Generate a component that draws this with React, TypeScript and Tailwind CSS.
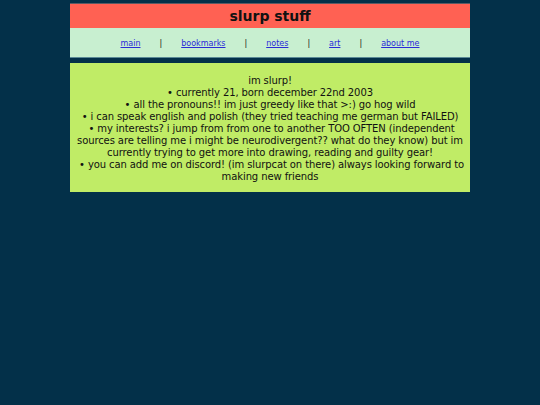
export default function App() {
  const links = ["main", "bookmarks", "notes", "art", "about me"];
  return (
    <div className="min-h-[405px] bg-[#033049] pt-[3px] font-['DejaVu_Sans',Verdana,sans-serif] text-[#111]">
      <div className="mx-auto w-[400px]">
        <div className="border-t border-[#5b5a63] bg-[#ff6153] py-[4px] text-center text-[14px] font-bold leading-[16px]">
          slurp stuff
        </div>
        <nav className="flex h-[30px] items-center justify-center gap-[19px] border-b border-[#5a8a96] bg-[#c8efd0] pt-[2px] text-[8px]">
          {links.map((l, i) => (
            <div key={l} className="flex items-center gap-[19px]">
              {i > 0 && <span className="text-[#111]">|</span>}
              <a href="#" className="text-[#2a2ad8] underline">
                {l}
              </a>
            </div>
          ))}
        </nav>
        <div className="mt-[5px] bg-[#c0ec66] px-[2px] pt-[12px] pb-[9px] text-center text-[10px] leading-[12px] tracking-[-0.1px]">
          <p>im slurp!</p>
          <p>• currently 21, born december 22nd 2003</p>
          <p>• all the pronouns!! im just greedy like that &gt;:) go hog wild</p>
          <p>• i can speak english and polish (they tried teaching me german but FAILED)</p>
          <p>
            {"\u00a0"}• my interests? i jump from from one to another TOO OFTEN (independent sources are telling me i
            might be neurodivergent?? what do they know) but im currently trying to get more into drawing, reading and
            guilty gear!
          </p>
          <p>{"\u00a0"}• you can add me on discord! (im slurpcat on there) always looking forward to making new friends</p>
        </div>
      </div>
    </div>
  );
}
